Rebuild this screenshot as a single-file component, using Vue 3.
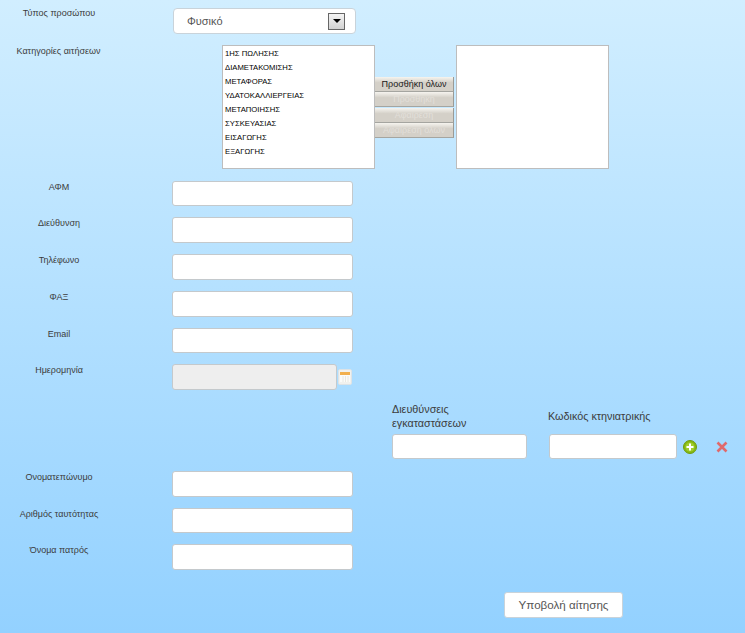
<script setup>
const rowsA = ['ΑΦΜ', 'Διεύθυνση', 'Τηλέφωνο', 'ΦΑΞ', 'Email']
const rowsB = ['Ονοματεπώνυμο', 'Αριθμός ταυτότητας', 'Όνομα πατρός']
const options = ['1ΗΣ ΠΩΛΗΣΗΣ', 'ΔΙΑΜΕΤΑΚΟΜΙΣΗΣ', 'ΜΕΤΑΦΟΡΑΣ', 'ΥΔΑΤΟΚΑΛΛΙΕΡΓΕΙΑΣ', 'ΜΕΤΑΠΟΙΗΣΗΣ', 'ΣΥΣΚΕΥΑΣΙΑΣ', 'ΕΙΣΑΓΩΓΗΣ', 'ΕΞΑΓΩΓΗΣ']
const actions = [
  { text: 'Προσθήκη όλων', off: false },
  { text: 'Προσθήκη', off: true },
  { text: 'Αφαίρεση', off: true },
  { text: 'Αφαίρεση όλων', off: true }
]
</script>

<template>
  <form class="page" @submit.prevent>
    <div class="row type-row">
      <label class="lbl">Τύπος προσώπου</label>
      <div class="select">
        <span>Φυσικό</span>
        <span class="drop"><i></i></span>
      </div>
    </div>

    <div class="row cat-row">
      <label class="lbl">Κατηγορίες αιτήσεων</label>
      <div class="picker">
        <ul class="list">
          <li v-for="o in options" :key="o">{{ o }}</li>
        </ul>
        <div class="actions">
          <button v-for="a in actions" :key="a.text" type="button" class="act" :class="{ off: a.off }">{{ a.text }}</button>
        </div>
        <div class="list right"></div>
      </div>
    </div>

    <div class="group-a">
      <div v-for="r in rowsA" :key="r" class="row field">
        <label class="lbl">{{ r }}</label>
        <input class="inp" type="text" />
      </div>
      <div class="row field date">
        <label class="lbl">Ημερομηνία</label>
        <input class="inp disabled" type="text" disabled />
        <svg class="cal" width="14" height="16" viewBox="0 0 14 16">
          <rect x="0.5" y="0.5" width="13" height="15" rx="1.5" fill="#f1f1ee" stroke="#dde3e6" />
          <rect x="2" y="3" width="10" height="3" fill="#f2b04e" />
          <rect x="2" y="6" width="10" height="7" fill="#fbfbf9" />
          <path d="M5 7v6M7.500 7v6M10 7v6" stroke="#e8e8e2" stroke-width="1" />
        </svg>
      </div>
    </div>

    <div class="addr">
      <div class="addr-col first">
        <div class="addr-lbl">Διευθύνσεις εγκαταστάσεων</div>
        <input class="inp a1" type="text" />
      </div>
      <div class="addr-col second">
        <div class="addr-lbl">Κωδικός κτηνιατρικής</div>
        <div class="addr-inputs">
          <input class="inp a2" type="text" />
          <svg class="plus" width="14" height="14" viewBox="0 0 14 14">
            <circle cx="7" cy="7" r="6.5" fill="#86b812" stroke="#6f9c10" />
            <circle cx="7" cy="7" r="4.6" fill="#a0cd2c" />
            <path d="M7 3.500v7M3.500 7h7" stroke="#fff" stroke-width="2" />
          </svg>
          <svg class="cross" width="12" height="12" viewBox="0 0 12 12">
            <path d="M1.500 1.500l9 9M10.500 1.500l-9 9" stroke="#e0696b" stroke-width="2.600" />
          </svg>
        </div>
      </div>
    </div>

    <div class="group-b">
      <div v-for="r in rowsB" :key="r" class="row field">
        <label class="lbl">{{ r }}</label>
        <input class="inp" type="text" />
      </div>
    </div>

    <div class="submit-row">
      <button type="button" class="submit">Υποβολή αίτησης</button>
    </div>
  </form>
</template>

<style>
html, body { margin: 0; padding: 0; }
</style>

<style scoped>
.page {
  box-sizing: border-box;
  width: 745px;
  height: 633px;
  overflow: hidden;
  padding-top: 8px;
  background: linear-gradient(#d1eeff, #93d1ff);
  font-family: "Liberation Sans", Arial, sans-serif;
  color: #3c3c3c;
}
.row {
  display: flex;
  align-items: flex-start;
}
.lbl {
  flex: none;
  width: 118px;
  margin-right: 54px;
  text-align: center;
  font-size: 9px;
  line-height: 12px;
  color: #3c3c3c;
}
.type-row .lbl { margin-top: -1px; margin-right: 55px; }
.select {
  box-sizing: border-box;
  width: 183px;
  height: 26px;
  display: flex;
  align-items: center;
  justify-content: space-between;
  padding: 0 10px 0 13px;
  background: #fff;
  border: 1px solid #c9d3da;
  border-radius: 4px;
  font-size: 11px;
  color: #555;
}
.drop {
  box-sizing: border-box;
  width: 17px;
  height: 17px;
  display: flex;
  align-items: center;
  justify-content: center;
  border: 1px solid #666;
  background: linear-gradient(#f4f4f4, #d2d2d2);
}
.drop i {
  width: 0;
  height: 0;
  border-left: 4px solid transparent;
  border-right: 4px solid transparent;
  border-top: 4px solid #000;
}
.cat-row { margin-top: 11px; height: 124px; }
.cat-row .lbl { margin-right: 104px; margin-left: -1px; width: 119px; }
.picker {
  display: flex;
  align-items: flex-start;
}
.list {
  box-sizing: border-box;
  width: 153px;
  height: 124px;
  margin: 0;
  padding: 1px 0 0 2px;
  list-style: none;
  background: #fff;
  border: 1px solid #bdbdbd;
}
.list li {
  height: 14px;
  line-height: 14px;
  font-size: 7.7px;
  color: #000;
  white-space: nowrap;
}
.list.right { margin-left: 2px; }
.actions {
  display: flex;
  flex-direction: column;
  gap: 0.330px;
  margin-top: 32px;
  width: 79px;
}
.act {
  box-sizing: border-box;
  width: 79px;
  height: 15px;
  padding: 1px 0 0;
  border: 0;
  border-right: 1px solid #9b9b96;
  border-bottom: 1px solid #a5a5a0;
  background: linear-gradient(#f6f4ef, #d4d0c8 40%);
  font-family: inherit;
  font-size: 9px;
  line-height: 13px;
  color: #1a1a1a;
  text-align: center;
}
.act.off {
  color: #e2dfd9;
}
.group-a { margin-top: 11.700px; }
.field { height: 25.750px; margin-bottom: 11px; }
.inp {
  box-sizing: border-box;
  width: 181px;
  height: 25.750px;
  margin: 0;
  padding: 0 6px;
  background: #fff;
  border: 1px solid #c4c9cc;
  border-radius: 3px;
  outline: none;
}
.inp.disabled {
  width: 165px;
  background: #eeeeee;
}
.cal { margin: 5px 0 0 1px; flex: none; }
.addr {
  display: flex;
  align-items: flex-start;
  margin-top: 11.800px;
  padding-left: 392px;
}
.addr-lbl {
  height: 28px;
  display: flex;
  align-items: center;
  margin-bottom: 4px;
  font-size: 10.800px;
  line-height: 14px;
  color: #3c3c3c;
}
.first { width: 135px; }
.first .addr-lbl { width: 110px; }
.second { margin-left: 22px; }
.second .addr-lbl { margin-left: -1px; }
.addr-inputs { display: flex; align-items: center; }
.inp.a1 { width: 135px; height: 25px; display: block; }
.inp.a2 { width: 128px; height: 25px; }
.plus { margin-left: 6px; margin-top: 1px; }
.cross { margin-left: 19px; margin-top: 1px; }
.group-b { margin-top: 11.900px; }
.group-b .field:last-child { margin-bottom: 0; }
.submit-row {
  padding-left: 504px;
  margin-top: 21.850px;
}
.submit {
  box-sizing: border-box;
  width: 119px;
  height: 26px;
  padding: 0;
  background: #fff;
  border: 1px solid #c9d3da;
  border-radius: 3px;
  font-family: inherit;
  font-size: 11.600px;
  color: #555;
}
</style>
